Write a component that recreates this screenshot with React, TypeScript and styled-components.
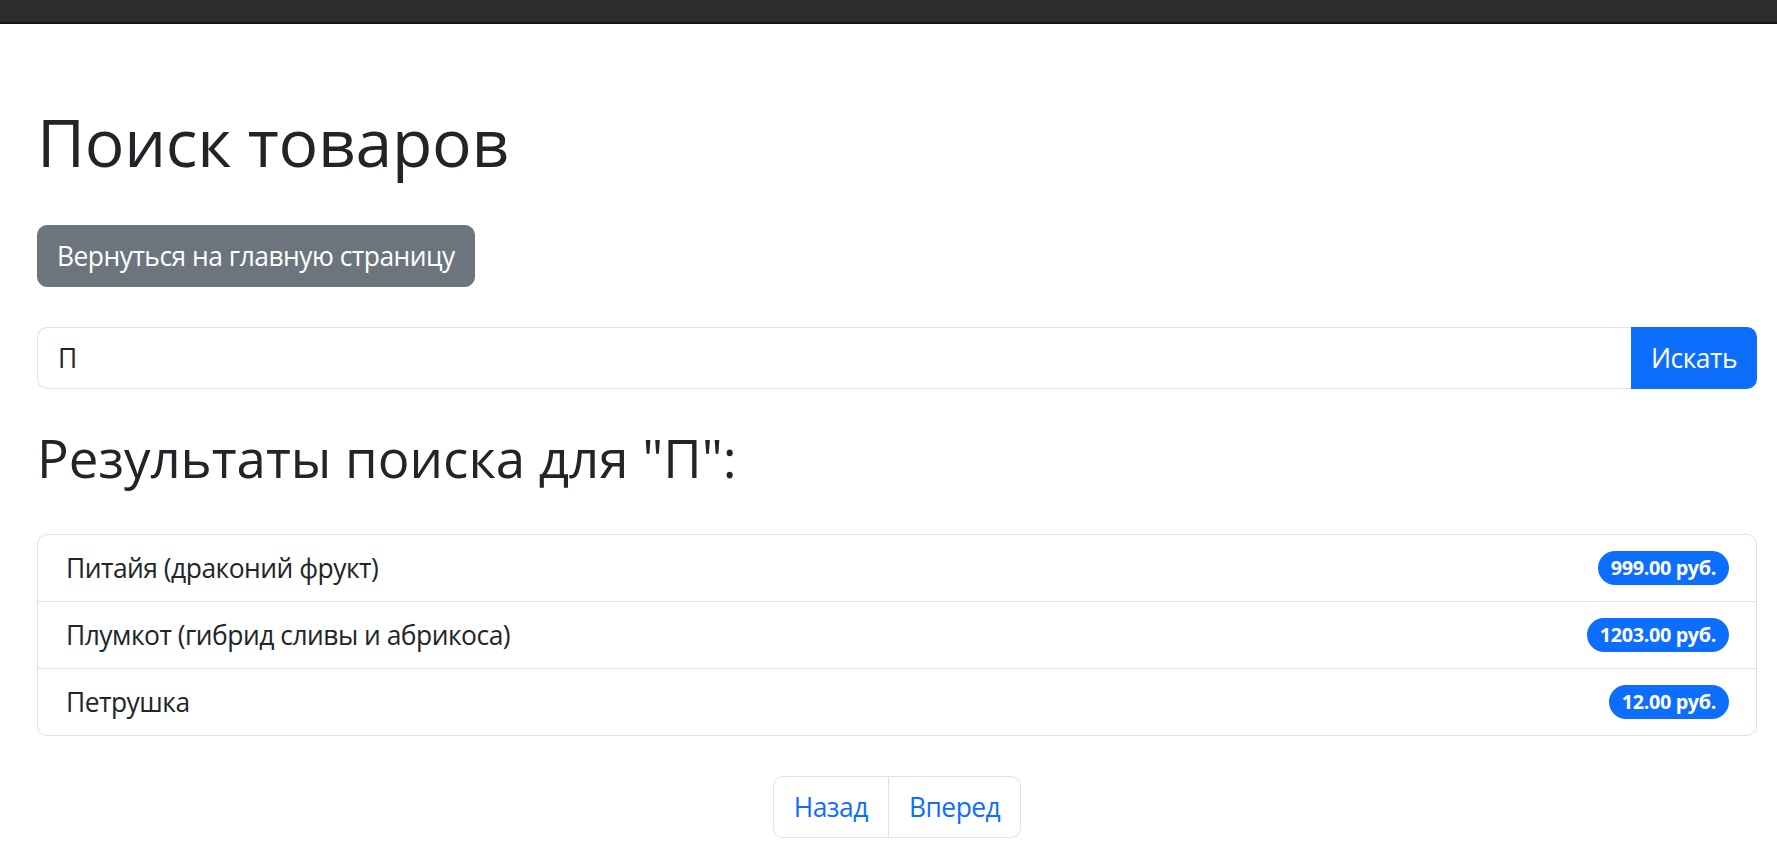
import styled, { createGlobalStyle } from 'styled-components';

const COLOR = {
  TEXT: '#212529',
  BORDER: '#dee2e6',
  PRIMARY: '#0d6efd',
  SECONDARY: '#6c757d',
  BAR: '#2c2c2c',
};

const results = [
  { name: 'Питайя (драконий фрукт)', price: '999.00 руб.' },
  { name: 'Плумкот (гибрид сливы и абрикоса)', price: '1203.00 руб.' },
  { name: 'Петрушка', price: '12.00 руб.' },
];

function App() {
  return (
    <>
      <GlobalStyle />
      <StTopBar />
      <StContainer>
        <StTitle>Поиск товаров</StTitle>
        <StBackButton type="button">Вернуться на главную страницу</StBackButton>
        <StSearchForm onSubmit={(e) => e.preventDefault()}>
          <StSearchInput defaultValue="П" />
          <StSearchButton type="submit">Искать</StSearchButton>
        </StSearchForm>
        <StResultsTitle>Результаты поиска для "П":</StResultsTitle>
        <StResultList>
          {results.map((item) => (
            <StResultItem key={item.name}>
              <span>{item.name}</span>
              <StPriceBadge>{item.price}</StPriceBadge>
            </StResultItem>
          ))}
        </StResultList>
        <StPagination>
          <StPageLink href="#">Назад</StPageLink>
          <StPageLink href="#">Вперед</StPageLink>
        </StPagination>
      </StContainer>
    </>
  );
}

export default App;

const GlobalStyle = createGlobalStyle`
  * {
    box-sizing: border-box;
  }

  body {
    margin: 0;
    background: #fff;
    color: ${COLOR.TEXT};
    font-family: 'Open Sans', 'Noto Sans', sans-serif;
    font-size: 26.4px;
    letter-spacing: -0.5px;
  }
`;

const StTopBar = styled.div`
  height: 24px;
  background: ${COLOR.BAR};
  box-shadow: inset 0 -2px 0 #141414;
`;

const StContainer = styled.main`
  padding: 0 20px 0 37px;
`;

const StTitle = styled.h1`
  margin: 77px 0 0;
  font-size: 66px;
  font-weight: 400;
  line-height: 80px;
  letter-spacing: -0.3px;
`;

const StBackButton = styled.button`
  display: block;
  margin-top: 44px;
  padding: 10px 19px;
  border: 1px solid ${COLOR.SECONDARY};
  border-radius: 10px;
  background: ${COLOR.SECONDARY};
  color: #fff;
  font: inherit;
  letter-spacing: inherit;
  line-height: 40px;
`;

const StSearchForm = styled.form`
  display: flex;
  margin-top: 40px;
  height: 62px;
`;

const StSearchInput = styled.input`
  flex: 1;
  min-width: 0;
  padding: 0 20px;
  border: 1px solid ${COLOR.BORDER};
  border-right: none;
  border-radius: 10px 0 0 10px;
  color: ${COLOR.TEXT};
  font: inherit;
  outline: none;
`;

const StSearchButton = styled.button`
  padding: 0 20px;
  border: none;
  border-radius: 0 10px 10px 0;
  background: ${COLOR.PRIMARY};
  color: #fff;
  font: inherit;
  letter-spacing: inherit;
`;

const StResultsTitle = styled.h2`
  margin: 37px 0 0;
  font-size: 52.8px;
  font-weight: 400;
  line-height: 64px;
  letter-spacing: 0;
`;

const StResultList = styled.ul`
  margin: 44px 0 0;
  padding: 0;
  list-style: none;
  border: 1px solid ${COLOR.BORDER};
  border-radius: 10px;
`;

const StResultItem = styled.li`
  display: flex;
  align-items: center;
  justify-content: space-between;
  padding: 13px 27px 13px 28px;
  line-height: 40px;

  & + & {
    border-top: 1px solid ${COLOR.BORDER};
  }
`;

const StPriceBadge = styled.span`
  padding: 7px 13px;
  border-radius: 50rem;
  background: ${COLOR.PRIMARY};
  color: #fff;
  font-size: 19.8px;
  font-weight: 700;
  line-height: 1;
  letter-spacing: -0.35px;
`;

const StPagination = styled.nav`
  display: flex;
  justify-content: center;
  margin-top: 40px;
`;

const StPageLink = styled.a`
  padding: 10px 20px;
  border: 1px solid ${COLOR.BORDER};
  color: ${COLOR.PRIMARY};
  line-height: 40px;
  text-decoration: none;

  &:first-child {
    border-radius: 10px 0 0 10px;
  }

  & + & {
    border-left: none;
  }

  &:last-child {
    border-radius: 0 10px 10px 0;
  }
`;
